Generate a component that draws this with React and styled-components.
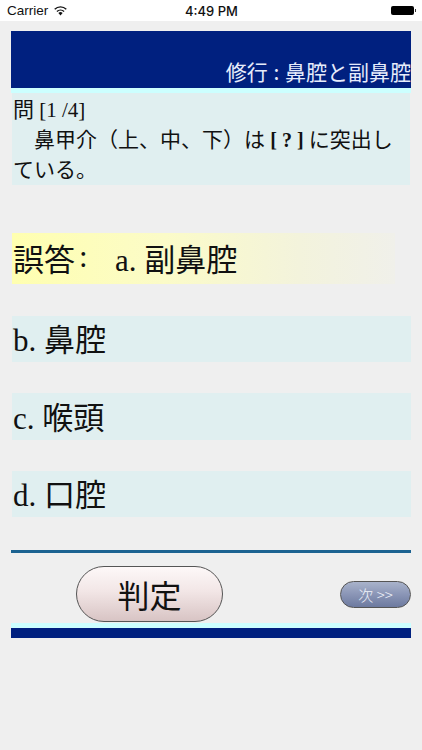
import React from "react";
import styled, { createGlobalStyle } from "styled-components";

const CJK = `"Liberation Serif", "Noto Sans CJK JP", serif`;

const Global = createGlobalStyle`
  html, body { margin: 0; padding: 0; background: #efefef; }
  body { width: 422px; height: 750px; overflow: hidden; font-family: ${CJK}; color: #111; }
`;

const Screen = styled.div`
  width: 422px;
  height: 750px;
  background: #efefef;
  display: flex;
  flex-direction: column;
`;

const StatusBar = styled.div`
  height: 21px;
  background: #fff;
  display: grid;
  grid-template-columns: 1fr auto 1fr;
  align-items: center;
  padding: 0 6px 0 7px;
  font-family: "Liberation Sans", sans-serif;
  font-size: 13.5px;
  color: #111;
`;

const Carrier = styled.div`
  display: flex;
  align-items: center;
  gap: 5px;
`;

const Clock = styled.div`
  font-family: Inter, sans-serif;
  font-weight: 500;
  font-size: 13px;
`;

const Battery = styled.div`
  justify-self: end;
  display: flex;
  align-items: center;
  gap: 1px;
`;

const BatteryBody = styled.div`
  width: 23px;
  height: 9px;
  border-radius: 2px;
  background: #000;
`;

const BatteryTip = styled.div`
  width: 1px;
  height: 3px;
  background: #333;
`;

const Content = styled.div`
  padding: 10px 11px 0;
  display: flex;
  flex-direction: column;
`;

const Header = styled.div`
  height: 57px;
  box-sizing: border-box;
  padding-bottom: 2px;
  background: #00207f;
  color: #e6ecfb;
  display: flex;
  align-items: flex-end;
  justify-content: flex-end;
  font-size: 21px;
  line-height: 30px;
  white-space: pre;
  font-family: "Noto Sans CJK JP", sans-serif;
  font-weight: 400;
`;

const Title = styled.span`
  word-spacing: 1px;
`;

const CyanBar = styled.div`
  height: 5px;
  background: #ccffff;
`;

const Question = styled.div`
  margin: 0 1px;
  height: 92px;
  background: #e0eff0;
  font-size: 21px;
  line-height: 30px;
  padding: 2px 14px 0 1px;
  box-sizing: border-box;
`;

const Blank = styled.b`
  font-size: 20px;
`;

const Indent = styled.span`
  display: inline-block;
  width: 21px;
`;

const Choices = styled.div`
  margin-top: 48px;
  display: flex;
  flex-direction: column;
  align-items: stretch;
`;

const Choice = styled.div`
  margin: 0 0 ${(p) => p.$gap}px 1px;
  height: ${(p) => p.$h}px;
  display: flex;
  align-items: center;
  font-size: 31px;
  padding: 0 0 3px 1px;
  box-sizing: border-box;
  white-space: pre;
  background: ${(p) =>
    p.$wrong
      ? "linear-gradient(90deg, #ffffb0 0%, #fbfbc8 40%, #f3f3dc 75%, #f0f0ea 100%)"
      : "#e0eff0"};
  ${(p) => p.$wrong && "margin-right: 16px;"}
`;

const Colon = styled.span`
  box-sizing: border-box;
  width: 40px;
  padding-left: 4px;
`;

const Rule = styled.div`
  margin-top: 33px;
  height: 3px;
  background: #1c6391;
`;

const Actions = styled.div`
  height: 70px;
  display: flex;
  align-items: center;
  justify-content: space-between;
  padding: 13px 0 1px 65px;
  box-sizing: border-box;
`;

const JudgeButton = styled.button`
  width: 147px;
  height: 56px;
  border-radius: 28px;
  border: 1.5px solid #555;
  background: linear-gradient(180deg, #fdf8f8 0%, #f2e6e6 45%, #d8c4c4 100%);
  font-family: ${CJK};
  font-size: 32px;
  color: #111;
  padding: 0;
`;

const NextButton = styled.button`
  width: 71px;
  height: 27px;
  border-radius: 13.5px;
  border: 1.5px solid #555;
  background: linear-gradient(180deg, #a9b3cb 0%, #8a95b6 50%, #6d7a9f 100%);
  color: #f0f3fa;
  font-family: "Noto Sans CJK JP", sans-serif;
  font-weight: 300;
  font-size: 15px;
  padding: 0;
`;

const Footer = styled.div`
  height: 10px;
  background: #00207f;
`;

const Wifi = () => (
  <svg width="15" height="11" viewBox="0 0 15 11">
    <path d="M7.5 10.5 L5.4 8.1 A3 3 0 0 1 9.6 8.1 Z" fill="#111" />
    <path d="M3.9 6.5 A5.3 5.3 0 0 1 11.1 6.5" fill="none" stroke="#111" strokeWidth="1.4" />
    <path d="M1.7 4.2 A8.4 8.4 0 0 1 13.3 4.2" fill="none" stroke="#111" strokeWidth="1.4" />
  </svg>
);

export default function App() {
  return (
    <Screen>
      <Global />
      <StatusBar>
        <Carrier>Carrier <Wifi /></Carrier>
        <Clock>4:49 PM</Clock>
        <Battery><BatteryBody /><BatteryTip /></Battery>
      </StatusBar>
      <Content>
        <Header><Title>修行 : 鼻腔と副鼻腔</Title></Header>
        <CyanBar />
        <Question>
          問 [1 /4]<br />
          <Indent />鼻甲介（上、中、下）は <Blank>[ ? ]</Blank> に突出している。
        </Question>
        <Choices>
          <Choice $wrong $h={51} $gap={32}>誤答<Colon>:</Colon>a. 副鼻腔</Choice>
          <Choice $h={46} $gap={31}>b. 鼻腔</Choice>
          <Choice $h={47} $gap={31}>c. 喉頭</Choice>
          <Choice $h={46} $gap={0}>d. 口腔</Choice>
        </Choices>
        <Rule />
        <Actions>
          <JudgeButton>判定</JudgeButton>
          <NextButton>次 &gt;&gt;</NextButton>
        </Actions>
        <CyanBar />
        <Footer />
      </Content>
    </Screen>
  );
}
